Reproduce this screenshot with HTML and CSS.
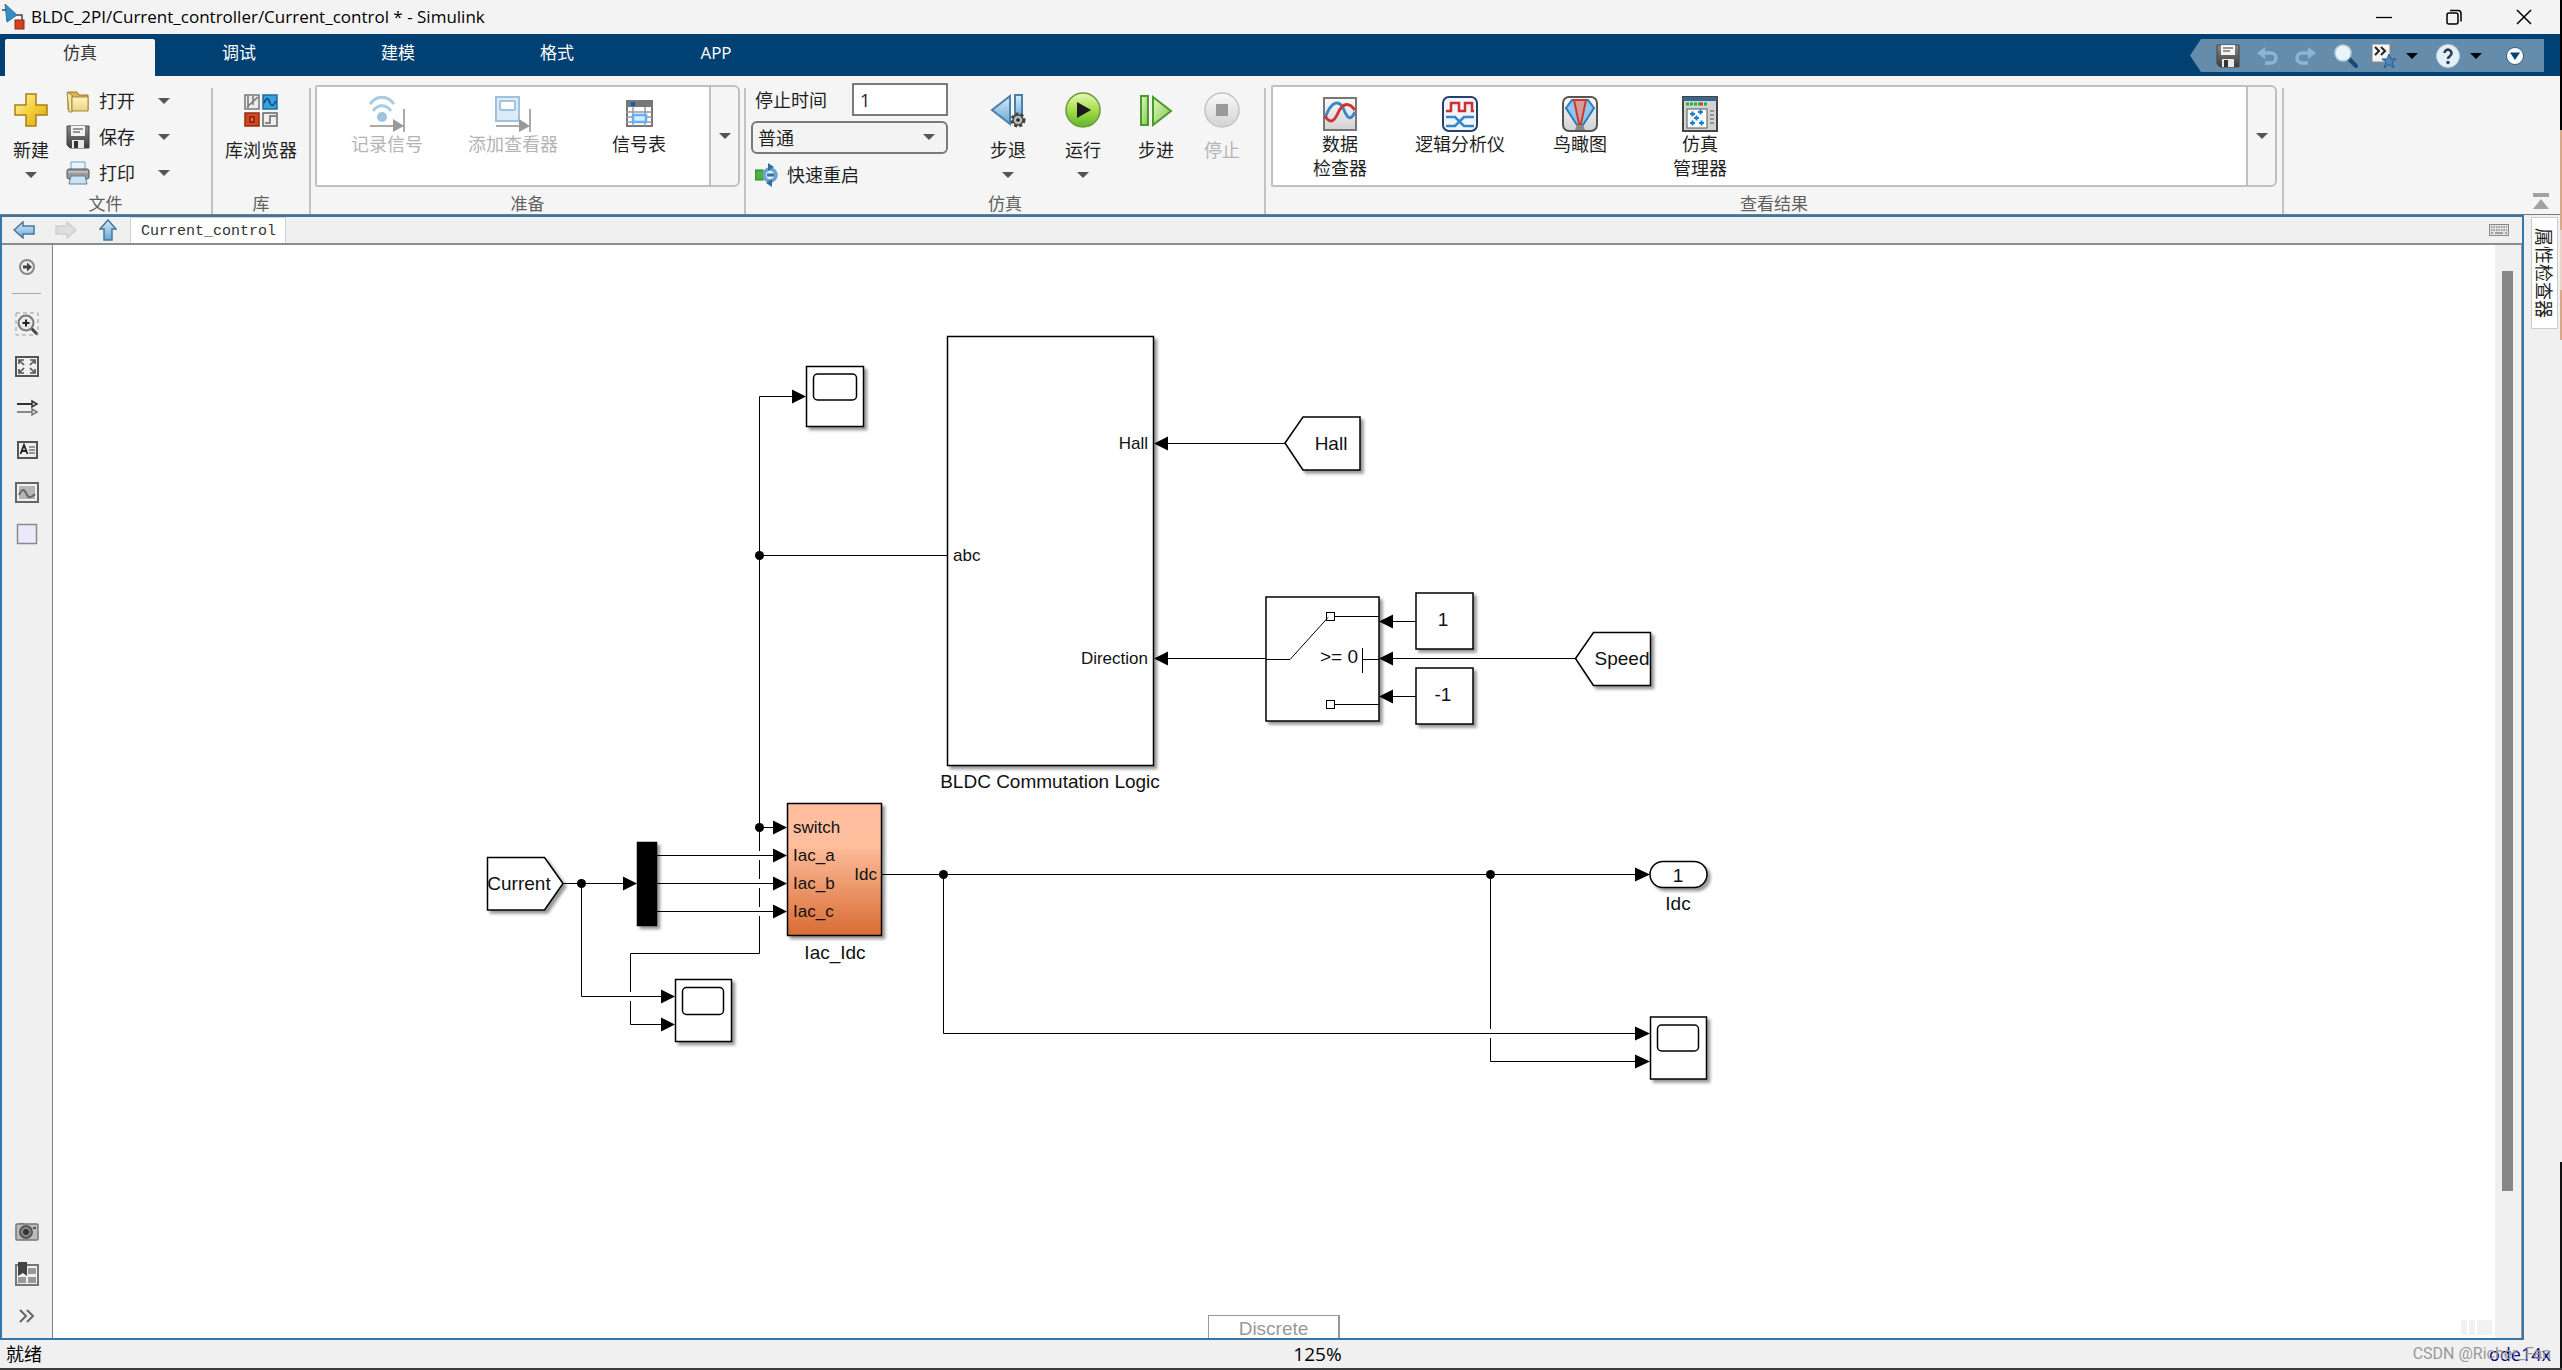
FILE: index.html
```html
<!DOCTYPE html>
<html lang="zh-CN">
<head>
<meta charset="utf-8">
<title>BLDC_2PI/Current_controller/Current_control * - Simulink</title>
<link rel="stylesheet" href="styles.css">
</head>
<body>
<svg class="defs" width="0" height="0" aria-hidden="true">
  <defs>
    <linearGradient id="gGold" x1="0" y1="0" x2="1" y2="1"><stop offset="0" stop-color="#fff6b0"/><stop offset=".5" stop-color="#f5cf3c"/><stop offset="1" stop-color="#d9a312"/></linearGradient>
    <linearGradient id="gPaper" x1="0" y1="0" x2="0" y2="1"><stop offset="0" stop-color="#fdf3c4"/><stop offset="1" stop-color="#ecd27a"/></linearGradient>
    <linearGradient id="gDark" x1="0" y1="0" x2="0" y2="1"><stop offset="0" stop-color="#8a8a8a"/><stop offset="1" stop-color="#3c3c3c"/></linearGradient>
    <linearGradient id="gBlue" x1="0" y1="0" x2="0" y2="1"><stop offset="0" stop-color="#d6ecfa"/><stop offset="1" stop-color="#6aa7d4"/></linearGradient>
    <linearGradient id="gGreen" x1="0" y1="0" x2="0" y2="1"><stop offset="0" stop-color="#eaf9b8"/><stop offset=".5" stop-color="#a6dc4a"/><stop offset="1" stop-color="#5fb52a"/></linearGradient>
    <linearGradient id="gGreenBar" x1="0" y1="0" x2="1" y2="1"><stop offset="0" stop-color="#e3f7c8"/><stop offset="1" stop-color="#7ccb45"/></linearGradient>
    <linearGradient id="gGray" x1="0" y1="0" x2="0" y2="1"><stop offset="0" stop-color="#fafafa"/><stop offset="1" stop-color="#d2d2d2"/></linearGradient>
    <linearGradient id="gBlock" x1="0" y1="0" x2="0" y2="1"><stop offset="0" stop-color="#ffbf9e"/><stop offset=".3" stop-color="#ffbf9e"/><stop offset="1" stop-color="#d86c34"/></linearGradient>
    <filter id="shadow" x="-20%" y="-20%" width="150%" height="150%"><feDropShadow dx="3" dy="3" stdDeviation="1.5" flood-color="#000" flood-opacity=".4"/></filter>
    <symbol id="iSave" viewBox="0 0 24 24"><path d="M1 1h22v22H4l-3-3z" fill="url(#gDark)" stroke="#444"/><path d="M5 1h14v10H5z" fill="#f4f4f4"/><path d="M7 4h10M7 7h7" stroke="#777" stroke-width="1.5"/><path d="M6 15h12v8H6z" fill="#e8e8e8"/><path d="M8 16h4v7H8z" fill="#333"/></symbol>
    <symbol id="iArrow" viewBox="0 0 12 6"><path d="M0 0h12L6 6z" fill="currentColor"/></symbol>
  </defs>
</svg>

<div class="window">
  <header class="titlebar">
    <svg class="logo" width="24" height="26" viewBox="0 0 24 26"><path d="M0 6h4M15 11h5v8" fill="none" stroke="#444" stroke-width="1.5"/><path d="M3 0l12 11-10 7z" fill="#2f8fc6" stroke="#2d6f9c"/><rect x="13" y="16" width="9" height="9" fill="#d6401d" stroke="#8d2a12"/></svg>
    <h1 class="title">BLDC_2PI/Current_controller/Current_control * - Simulink</h1>
    <div class="winctl">
      <button aria-label="最小化"><svg width="16" height="16"><path d="M0 8.5h16" stroke="#000" stroke-width="1.3"/></svg></button>
      <button aria-label="还原"><svg width="16" height="16" fill="none" stroke="#000" stroke-width="1.5"><rect x="1" y="4" width="11" height="11" rx="2"/><path d="M4 1.500h8a3 3 0 0 1 3 3v8"/></svg></button>
      <button aria-label="关闭"><svg width="16" height="16"><path d="M1 1l14 14M15 1L1 15" stroke="#000" stroke-width="1.5"/></svg></button>
    </div>
  </header>

  <nav class="tabs">
    <button class="tab active">仿真</button>
    <button class="tab">调试</button>
    <button class="tab">建模</button>
    <button class="tab">格式</button>
    <button class="tab">APP</button>
    <div class="qat">
      <button aria-label="保存"><svg width="24" height="24"><use href="#iSave"/></svg></button>
      <button class="undo" aria-label="撤销"><svg width="22" height="18" viewBox="0 0 22 18"><path d="M4 6h10a5 5 0 0 1 0 10H8" fill="none" stroke="#8db4d2" stroke-width="3.500"/><path d="M8 0v12L0 6z" fill="#8db4d2"/></svg></button>
      <button class="redo" aria-label="重做"><svg width="22" height="18" viewBox="0 0 22 18"><path d="M18 6H8a5 5 0 0 0 0 10h6" fill="none" stroke="#8db4d2" stroke-width="3.500"/><path d="M14 0v12l8-6z" fill="#8db4d2"/></svg></button>
      <button class="find" aria-label="查找"><svg width="24" height="24" viewBox="0 0 24 24"><path d="M14 14l8 8" stroke="#134a7c" stroke-width="4" stroke-linecap="round"/><circle cx="9" cy="9" r="8" fill="#eaf4fb" stroke="#b9cddc" stroke-width="1.5"/></svg></button>
      <button class="fav" aria-label="收藏夹"><svg width="24" height="24" viewBox="0 0 24 24"><rect x="0" y="0" width="18" height="18" fill="#f4f4f4" stroke="#888"/><path d="M3 3l4 4-4 4M9 3l4 4-4 4" fill="none" stroke="#222" stroke-width="2"/><path d="M17 10l2 5h5l-4 3 2 6-5-4-5 4 2-6-4-3h5z" fill="#4a88bd" stroke="#275a86"/></svg></button>
      <svg class="qarrow" width="12" height="6"><use href="#iArrow"/></svg>
      <button class="help" aria-label="帮助"><svg width="24" height="24" viewBox="0 0 24 24"><circle cx="12" cy="12" r="11.500" fill="#e4eef6" stroke="#b7cfe2"/><path d="M8.500 9a3.500 3.500 0 1 1 5.500 3c-1.500 1-2 1.500-2 3" fill="none" stroke="#2c3e5c" stroke-width="2.600"/><circle cx="12" cy="18.500" r="1.700" fill="#2c3e5c"/></svg></button>
      <svg class="qarrow" width="12" height="6"><use href="#iArrow"/></svg>
      <button class="more" aria-label="更多"><svg width="18" height="18" viewBox="0 0 18 18"><circle cx="9" cy="9" r="9" fill="#2a6496"/><circle cx="9" cy="9" r="8" fill="#fff"/><path d="M4 5.500h10L9 13z" fill="#0c4376"/></svg></button>
    </div>
  </nav>

  <div class="toolstrip">
    <section class="section file">
      <div class="content">
        <button class="big new"><svg width="36" height="36" viewBox="0 0 36 36"><path d="M13 2h10v11h11v10H23v11H13V23H2V13h11z" fill="url(#gGold)" stroke="#a97f14" stroke-width="1.5"/></svg><span>新建</span><svg class="drop" width="12" height="6"><use href="#iArrow"/></svg></button>
        <div class="rows">
          <button class="row"><svg width="24" height="24" viewBox="0 0 24 24"><path d="M2 3h9l2 3h9v15H2z" fill="#d9b652" stroke="#9a7a22"/><path d="M1 3l5 3v17H3z" fill="#f6e7a8" stroke="#a5873a"/><path d="M6 8h16v14H6z" fill="url(#gPaper)" stroke="#a5873a"/></svg><span>打开</span><svg class="drop" width="12" height="6"><use href="#iArrow"/></svg></button>
          <button class="row"><svg width="24" height="24"><use href="#iSave"/></svg><span>保存</span><svg class="drop" width="12" height="6"><use href="#iArrow"/></svg></button>
          <button class="row"><svg width="24" height="24" viewBox="0 0 24 24"><path d="M5 1h14v9H5z" fill="#e8f4fc" stroke="#6f9fc4"/><rect x="1" y="8" width="22" height="10" rx="2" fill="#999" stroke="#555"/><path d="M2 11h20" stroke="#ddd"/><path d="M5 15h14l2 8H3z" fill="#c9e2f4" stroke="#5c83a3"/></svg><span>打印</span><svg class="drop" width="12" height="6"><use href="#iArrow"/></svg></button>
        </div>
      </div>
      <h2>文件</h2>
    </section>
    <i class="divider"></i>
    <section class="section lib">
      <div class="content">
        <button class="big"><svg width="36" height="36" viewBox="0 0 36 36"><rect x="2" y="3" width="14" height="14" fill="#ececec" stroke="#777" stroke-width="1.500"/><path d="M5 4v12M4 15L15 5M10 4v9" stroke="#777" stroke-width="1.500"/><rect x="20" y="3" width="14" height="14" fill="#3aa0dc" stroke="#1d6ea3" stroke-width="1.500"/><path d="M21 11c3-8 5-3 6 0s3 4 6-2" fill="none" stroke="#0b4772" stroke-width="1.500"/><rect x="2" y="21" width="14" height="13" fill="#d8441c" stroke="#8f2c10" stroke-width="1.500"/><rect x="7" y="25" width="4" height="5" fill="#e96c48" stroke="#7a220b" stroke-width="1.500"/><rect x="20" y="21" width="14" height="13" fill="#eee" stroke="#666" stroke-width="1.500"/><path d="M22 31h5v-7h6" fill="none" stroke="#666" stroke-width="1.500"/></svg><span>库浏览器</span></button>
      </div>
      <h2>库</h2>
    </section>
    <i class="divider"></i>
    <section class="section prepare">
      <div class="content">
        <div class="gallery">
          <div class="items">
            <button class="item" disabled><svg width="36" height="36" viewBox="0 0 36 36"><g fill="none" stroke="#a9cbe3" stroke-width="3"><path d="M1 8c7-9 17-9 24 0M4 15c5-7 13-7 18 0"/></g><circle cx="13" cy="21" r="5" fill="#a0c3dd"/><path d="M1 30h24M35 13v23" stroke="#aaa" stroke-width="2"/><path d="M24 23l11 7-11 6z" fill="#999"/></svg><span>记录信号</span></button>
            <button class="item" disabled><svg width="36" height="36" viewBox="0 0 36 36"><rect x="1" y="1" width="23" height="24" fill="#dcebf6" stroke="#9cc3e0" stroke-width="2"/><rect x="5" y="5" width="15" height="9" rx="1" fill="#fff" stroke="#a0c4de" stroke-width="2"/><path d="M1 30h24M35 13v23" stroke="#aaa" stroke-width="2"/><path d="M24 23l11 7-11 6z" fill="#999"/></svg><span>添加查看器</span></button>
            <button class="item"><svg width="36" height="36" viewBox="0 0 36 36"><rect x="6" y="5" width="25" height="25" fill="#fff" stroke="#777" stroke-width="2"/><path d="M5 5h27v6H5z" fill="#777"/><rect x="10" y="6" width="4" height="4" fill="#0a5fae"/><path d="M5 16h26M5 21h26M5 26h26M12 11v19M24 11v19" stroke="#999" stroke-width="1.500"/><rect x="12" y="19" width="13" height="7" fill="#d8ecff" stroke="#62b0fa" stroke-width="2.500"/></svg><span>信号表</span></button>
          </div>
          <button class="expand" aria-label="展开"><svg width="12" height="6"><use href="#iArrow"/></svg></button>
        </div>
      </div>
      <h2>准备</h2>
    </section>
    <i class="divider"></i>
    <section class="section sim">
      <div class="content">
        <div class="form">
          <div class="field"><label for="stop">停止时间</label><input id="stop" type="text" value="1"></div>
          <div class="combo"><select aria-label="仿真模式"><option>普通</option></select><svg width="12" height="6"><use href="#iArrow"/></svg></div>
          <button class="restart"><svg width="24" height="24" viewBox="0 0 24 24"><rect x="0" y="7" width="8" height="10" fill="#4fb13d" stroke="#2c7a22"/><circle cx="15" cy="12" r="6" fill="#d8ecf8" stroke="#6ba3cc" stroke-width="3.500"/><path d="M13 0v8l6-4zM17 16v8l-6-4z" fill="#356f9d"/><path d="M12 12h7" stroke="#356f9d" stroke-width="3"/></svg><span>快速重启</span></button>
        </div>
        <button class="big back"><svg width="36" height="36" viewBox="0 0 36 36"><path d="M20 4v28L2 18z" fill="url(#gBlue)" stroke="#4a7fa9" stroke-width="2"/><rect x="25" y="3" width="7" height="24" fill="url(#gBlue)" stroke="#4a7fa9" stroke-width="2"/><circle cx="28" cy="28" r="6" fill="none" stroke="#444" stroke-width="3" stroke-dasharray="3 2"/><circle cx="28" cy="28" r="5" fill="#bbb" stroke="#444" stroke-width="1.500"/><circle cx="28" cy="28" r="1.800" fill="#222"/></svg><span>步退</span><svg class="drop" width="12" height="6"><use href="#iArrow"/></svg></button>
        <button class="big run"><svg width="36" height="36" viewBox="0 0 36 36"><circle cx="18" cy="18" r="17" fill="url(#gGreen)" stroke="#6b9a3c" stroke-width="1.500"/><path d="M12 10l14 8-14 8z" fill="#1b1b1b"/></svg><span>运行</span><svg class="drop" width="12" height="6"><use href="#iArrow"/></svg></button>
        <button class="big fwd"><svg width="36" height="36" viewBox="0 0 36 36"><rect x="3" y="4" width="7" height="29" fill="url(#gGreenBar)" stroke="#4c9a2c" stroke-width="2"/><path d="M15 5v28l18-14z" fill="url(#gGreenBar)" stroke="#4c9a2c" stroke-width="2"/></svg><span>步进</span></button>
        <button class="big stop" disabled><svg width="36" height="36" viewBox="0 0 36 36"><circle cx="18" cy="18" r="17" fill="url(#gGray)" stroke="#c4c4c4" stroke-width="1.500"/><rect x="12" y="12" width="12" height="12" fill="#9a9a9a"/></svg><span>停止</span></button>
      </div>
      <h2>仿真</h2>
    </section>
    <i class="divider"></i>
    <section class="section results">
      <div class="content">
        <div class="gallery">
          <div class="items wide">
            <button class="item"><svg width="36" height="36" viewBox="0 0 36 36"><rect x="2" y="2" width="32" height="32" fill="url(#gGray)" stroke="#777" stroke-width="2"/><path d="M3 22C10 3 18 4 22 14s7 10 11 2" fill="none" stroke="#3b86c8" stroke-width="3"/><path d="M3 20c5 8 9 6 13-3S26 5 33 14" fill="none" stroke="#cf3432" stroke-width="3"/></svg><span>数据<br>检查器</span></button>
            <button class="item"><svg width="36" height="36" viewBox="0 0 36 36"><rect x="1" y="1" width="34" height="34" rx="6" fill="#f1f4fa" stroke="#24406f" stroke-width="2"/><path d="M4 15h5V7h8v8h6V7h7v8h2" fill="none" stroke="#cf2f2f" stroke-width="2.500"/><path d="M4 21h9l9 9h10M4 30h9l9-9h10" fill="none" stroke="#3486cc" stroke-width="2.500"/></svg><span>逻辑分析仪</span></button>
            <button class="item"><svg width="36" height="36" viewBox="0 0 36 36"><rect x="1" y="1" width="34" height="34" rx="6" fill="url(#gGray)" stroke="#555" stroke-width="2"/><path d="M4 12l6-8h16l6 8-11 17h-6z" fill="#8dc6ee" stroke="#2d7dbd" stroke-width="2"/><path d="M12 4h12l-5 24h-2z" fill="#d69a97" stroke="#c93b2f" stroke-width="2"/><path d="M15 29h6l2 5H13z" fill="#888"/></svg><span>鸟瞰图</span></button>
            <button class="item"><svg width="36" height="36" viewBox="0 0 36 36"><rect x="1" y="1" width="34" height="34" fill="#d2d2d2" stroke="#444" stroke-width="2"/><path d="M1 1h34v4H1z" fill="#39668f"/><path d="M4 8h15" stroke="#19b63a" stroke-width="3" stroke-dasharray="3 1"/><path d="M18 8h3" stroke="#e03a20" stroke-width="3"/><path d="M22 8h3" stroke="#19b63a" stroke-width="3"/><rect x="5" y="13" width="20" height="19" fill="#fff" stroke="#555"/><path d="M8 18h5M10.500 15.500v5M16 16h5M18.500 13.500v5M12 22h5M14.500 19.500v5M8 27h5M10.500 24.500v5M17 27h5M19.500 24.500v5" stroke="#1580cc" stroke-width="2"/><path d="M28 15h4M28 19h4M28 23h4M28 27h4" stroke="#555"/></svg><span>仿真<br>管理器</span></button>
          </div>
          <button class="expand" aria-label="展开"><svg width="12" height="6"><use href="#iArrow"/></svg></button>
        </div>
      </div>
      <h2>查看结果</h2>
    </section>
    <i class="divider"></i>
    <div class="tail"><button aria-label="最小化工具条"><svg width="16" height="16"><path d="M0 0h16v4H0zM8 6l8 10H0z" fill="#a2a2a2"/></svg></button></div>
  </div>

  <div class="workspace">
    <main class="editor">
      <div class="crumbs">
        <button aria-label="后退"><svg width="22" height="18" viewBox="0 0 22 18"><path d="M1 9l9-8v4h11v8H10v4z" fill="url(#gBlue)" stroke="#45779c" stroke-width="1.500"/></svg></button>
        <button class="next" aria-label="前进"><svg width="22" height="18" viewBox="0 0 22 18"><path d="M21 9l-9-8v4H1v8h11v4z" fill="#dedede" stroke="#cfcfcf" stroke-width="1.500"/></svg></button>
        <button class="up" aria-label="转到父级"><svg width="18" height="22" viewBox="0 0 18 22"><path d="M9 1l8 9h-4v11H5V10H1z" fill="url(#gBlue)" stroke="#45779c" stroke-width="1.500"/></svg></button>
        <a class="crumb" href="#model">Current_control</a>
        <button class="keys" aria-label="键盘"><svg width="20" height="12" viewBox="0 0 20 12"><rect x=".5" y=".5" width="19" height="11" fill="#e4e4e4" stroke="#888"/><path d="M2 3h16M2 6h16" stroke="#888" stroke-width="1.500" stroke-dasharray="1.500 1"/><path d="M2 9h2M6 9h8M16 9h2" stroke="#888" stroke-width="1.500"/></svg></button>
      </div>
      <div class="stage">
        <aside class="palette">
          <button aria-label="隐藏浏览器"><svg width="24" height="24" viewBox="0 0 24 24"><circle cx="12" cy="12" r="7" fill="#eee" stroke="#888" stroke-width="2"/><path d="M8 12h5" stroke="#444" stroke-width="3"/><path d="M12 7.500v9l5-4.500z" fill="#444"/></svg></button>
          <hr>
          <button aria-label="缩放"><svg width="24" height="24" viewBox="0 0 24 24"><rect x="1" y="1" width="22" height="22" fill="none" stroke="#999" stroke-dasharray="4 3"/><path d="M16 16l6 6" stroke="#444" stroke-width="3"/><circle cx="11" cy="11" r="7.500" fill="#e8e8e8" stroke="#777" stroke-width="2"/><path d="M7.500 11h7M11 7.500v7" stroke="#222" stroke-width="2"/></svg></button>
          <button aria-label="适应视图"><svg width="24" height="24" viewBox="0 0 24 24"><rect x="1" y="3" width="22" height="19" fill="#f0f0f0" stroke="#555" stroke-width="2"/><path d="M4 10V6h5M5 7l4 4M20 10V6h-5M19 7l-4 4M4 15v4h5M5 18l4-4M20 15v4h-5M19 18l-4-4" fill="none" stroke="#555" stroke-width="1.700"/></svg></button>
          <button aria-label="采样时间"><svg width="24" height="24" viewBox="0 0 24 24"><path d="M2 8h16" stroke="#333" stroke-width="2"/><path d="M17 5l5 3-5 3z" fill="#ddd" stroke="#333" stroke-width="1.500"/><path d="M2 16h16" stroke="#888" stroke-width="2"/><path d="M17 13l5 3-5 3z" fill="#eee" stroke="#777" stroke-width="1.500"/></svg></button>
          <button aria-label="注释"><svg width="24" height="24" viewBox="0 0 24 24"><rect x="3" y="4" width="19" height="16" fill="#eee" stroke="#555" stroke-width="2"/><path d="M5.500 16l3.500-9 3.500 9M7 13h4" fill="none" stroke="#222" stroke-width="1.800"/><path d="M14 9h6M14 12h6M14 15h6" stroke="#777" stroke-width="1.500"/></svg></button>
          <button aria-label="图像"><svg width="24" height="24" viewBox="0 0 24 24"><rect x="1" y="3" width="22" height="19" fill="#f0f0f0" stroke="#666" stroke-width="2"/><rect x="4" y="6" width="16" height="13" fill="#b5b5b5"/><path d="M4 15c4-9 6-4 8 0s5 2 8-1" fill="none" stroke="#666" stroke-width="2"/></svg></button>
          <button aria-label="区域"><svg width="24" height="24" viewBox="0 0 24 24"><rect x="2.500" y="2.500" width="19" height="19" fill="#ebe9fa" stroke="#8a8a8a" stroke-width="1.500"/></svg></button>
          <button class="camera" aria-label="截图"><svg width="24" height="24" viewBox="0 0 24 24"><path d="M4 3h5v3H4z" fill="#777"/><rect x="1" y="4" width="22" height="16" rx="1" fill="#bcbcbc" stroke="#777" stroke-width="1.500"/><circle cx="11" cy="12" r="6" fill="#888" stroke="#555" stroke-width="2"/><circle cx="11" cy="12" r="3" fill="#333"/><rect x="18" y="7" width="3" height="2" fill="#555"/></svg></button>
          <button aria-label="视图标记"><svg width="24" height="24" viewBox="0 0 24 24"><rect x="1" y="3" width="22" height="20" fill="#f0f0f0" stroke="#777" stroke-width="2"/><path d="M13 6h8v6h-8zM3 15h8v6H3zM13 15h8v6h-8z" fill="#999"/><path d="M3 0h9v14l-4-3-5 3z" fill="#444"/></svg></button>
          <button aria-label="展开面板"><svg width="24" height="24" viewBox="0 0 24 24"><path d="M5 6l6 6-6 6M12 6l6 6-6 6" fill="none" stroke="#666" stroke-width="2"/></svg></button>
        </aside>
        <div class="canvas" id="model">
          <svg class="diagram" width="100%" height="100%">
            <g transform="translate(-53 -245)">
              <g class="wire">
                <path d="M759.500 827V396.500H794M759.500 555.500H947M1168 443.500H1286M1168 658.500H1266M1392 621.500H1416M1392 658.500H1577M1392 696.500H1416"/>
                <path d="M563 883.500H624M657 855.500H774M657 883.500H774M657 911.500H774M759 827.500H774M882 874.500H1636"/>
                <path d="M759.500 827V851M759.500 860V879M759.500 888V907M759.500 916V953.500H630.500V992M630.500 1001V1024.500H662M581.500 883V996.500H662"/>
                <path d="M943.500 874V1033.500H1636M1490.500 874V1029M1490.500 1038V1061.500H1636"/>
              </g>
              <g class="heads">
                <path d="M806 396.500l-14-7v14zM1154 443.500l14-7v14zM1154 658.500l14-7v14zM1379 621.500l14-7v14zM1379 658.500l14-7v14zM1379 696.500l14-7v14z"/>
                <path d="M637 883.500l-14-7v14zM787 827.500l-14-7v14zM787 855.500l-14-7v14zM787 883.500l-14-7v14zM787 911.500l-14-7v14zM675 996.500l-14-7v14zM675 1024.500l-14-7v14zM1650 874.500l-15-7v14zM1650 1033.500l-15-7v14zM1650 1061.500l-15-7v14z"/>
                <circle cx="759.500" cy="555.500" r="4.500"/><circle cx="759.500" cy="827.500" r="4.500"/><circle cx="581.500" cy="883.500" r="4.500"/><circle cx="943.500" cy="874.500" r="4.500"/><circle cx="1490.500" cy="874.500" r="4.500"/>
              </g>
              <g class="block">
                <rect x="947.500" y="336.500" width="206" height="429"/>
                <rect x="806.500" y="366.500" width="57" height="60"/>
                <path d="M1285 443l18-26h57v53h-57z"/>
                <rect x="1266" y="597" width="113" height="124"/>
                <rect x="1416" y="593" width="57" height="56"/>
                <rect x="1416" y="668" width="57" height="56"/>
                <path d="M1575.500 658.500l18-26h57v53h-57z"/>
                <path d="M487.500 857.500h57l18.500 26-18.500 26.500h-57z"/>
                <rect class="mux" x="637.500" y="842.500" width="19" height="83"/>
                <rect class="sub" x="787.500" y="803.500" width="94" height="132"/>
                <rect x="675.500" y="979.500" width="56" height="62"/>
                <rect x="1650" y="861.500" width="57" height="26" rx="13"/>
                <rect x="1650.500" y="1017" width="56" height="62"/>
              </g>
              <g class="screen">
                <rect x="813.500" y="374" width="43" height="26" rx="4"/>
                <rect x="682.500" y="987.500" width="41" height="27" rx="4"/>
                <rect x="1657.500" y="1025" width="41" height="26" rx="4"/>
              </g>
              <g class="wire">
                <path d="M1266 659.500h24l38-42M1334 616.500h45M1334 704.500h45M1362.500 648v25M1362 659.500h17"/>
                <rect x="1326.500" y="612.500" width="8" height="8"/><rect x="1326.500" y="700.500" width="8" height="8"/>
              </g>
              <g class="port">
                <text x="953" y="561">abc</text>
                <text x="1148" y="449" text-anchor="end">Hall</text>
                <text x="1148" y="664" text-anchor="end">Direction</text>
                <text x="793" y="833">switch</text>
                <text x="793" y="861">Iac_a</text>
                <text x="793" y="889">Iac_b</text>
                <text x="793" y="917">Iac_c</text>
                <text x="877" y="880" text-anchor="end">Idc</text>
              </g>
              <g class="name">
                <text x="1320" y="663">&gt;= 0</text>
                <text x="1050" y="788" text-anchor="middle">BLDC Commutation Logic</text>
                <text x="1331" y="450" text-anchor="middle">Hall</text>
                <text x="1622" y="665" text-anchor="middle">Speed</text>
                <text x="1443" y="626" text-anchor="middle">1</text>
                <text x="1443" y="701" text-anchor="middle">-1</text>
                <text x="519" y="890" text-anchor="middle">Current</text>
                <text x="835" y="959" text-anchor="middle">Iac_Idc</text>
                <text x="1678" y="882" text-anchor="middle">1</text>
                <text x="1678" y="910" text-anchor="middle">Idc</text>
              </g>
            </g>
          </svg>
          <div class="badge">Discrete</div>
          <div class="grip"><i></i><i></i><i></i></div>
        </div>
        <div class="scroll"><div class="thumb"></div></div>
      </div>
    </main>
    <aside class="dock"><button class="inspector">属性检查器</button></aside>
  </div>

  <footer class="status">
    <span>就绪</span>
    <span class="zoom">125%</span>
    <span class="solver"><span class="mark">CSDN @Richer_Fan</span><a href="#model">ode14x</a></span>
  </footer>
</div>
<div class="edge"></div>
</body>
</html>
```
FILE: styles.css
```css
* { box-sizing: border-box; }

body {
  margin: 0;
  min-height: 100vh;
  display: flex;
  background: #3c3c3c;
  padding-bottom: 2px;
  font-family: "Open Sans", "Noto Sans CJK SC", sans-serif;
  font-size: 18px;
  line-height: 24px;
  color: #1f1f1f;
}

button {
  margin: 0;
  padding: 0;
  border: 0;
  background: none;
  font: inherit;
  color: inherit;
}

svg { display: block; flex: none; }
.defs { position: absolute; }

.window {
  flex: 1;
  min-width: 0;
  display: flex;
  flex-direction: column;
  background: #f0f0f0;
}

.edge {
  width: 2px;
  background: linear-gradient(#000 130px, #d9a889 130px 230px, #ecd3cc 230px 290px, #d9a889 290px 340px, #f0f0f0 340px 1162px, #111 1162px);
}

/* title bar */
.titlebar {
  height: 34px;
  display: flex;
  align-items: center;
  padding-left: 2px;
  background: #f3f3f3;
}
.title {
  flex: 1;
  margin: 0 0 0 5px;
  font-size: 17px;
  font-weight: 400;
  color: #000;
}
.winctl { display: flex; gap: 54px; padding-right: 28px; }

/* ribbon tabs */
.tabs {
  height: 42px;
  display: flex;
  align-items: flex-end;
  gap: 9px;
  padding-left: 5px;
  background: #004073;
}
.tab {
  width: 150px;
  height: 37px;
  padding-bottom: 10px;
  font-size: 17px;
  color: #fff;
}
.tab.active { background: #f5f5f5; color: #333; border-radius: 2px 2px 0 0; }

.qat {
  width: 354px;
  height: 33px;
  margin: 0 16px 4px auto;
  padding-left: 26px;
  display: flex;
  align-items: center;
  background: #668cac;
  clip-path: polygon(11px 0, 100% 0, 100% 100%, 11px 100%, 0 50%);
  color: #000;
}
.undo { margin-left: 17px; }
.redo { margin-left: 15px; }
.find { margin-left: 18px; }
.fav { margin-left: 14px; }
.qarrow { margin-left: 10px; }
.help { margin-left: 18px; }
.more { margin-left: 24px; }

/* toolstrip */
.toolstrip {
  height: 139px;
  display: flex;
  background: #f5f5f5;
  border-bottom: 1px solid #7b7b7b;
  color: #1f1f1f;
}
.divider { width: 2px; margin-top: 12px; background: #c3c3c3; }
.section { display: flex; flex-direction: column; }
.section h2 {
  margin: 0;
  font-size: 17px;
  line-height: 20px;
  font-weight: 400;
  text-align: center;
  color: #5f5f5f;
}
.content { height: 118px; display: flex; padding-top: 7px; }
.drop, .expand, .combo svg { color: #555; }

.big {
  display: flex;
  flex-direction: column;
  align-items: center;
  padding-top: 9px;
}
.big span { margin-top: 10px; white-space: nowrap; }
.big .drop { margin-top: 10px; }

.file { width: 211px; }
.new { width: 62px; }
.rows { display: flex; flex-direction: column; padding-left: 4px; }
.row { height: 36px; display: flex; align-items: center; }
.row span { margin-left: 9px; }
.row .drop { margin-left: 23px; }

.lib { width: 96px; }
.lib .big { width: 96px; }

.prepare { width: 433px; }
.prepare .content { padding-left: 4px; padding-right: 4px; }
.gallery {
  flex: 1;
  height: 102px;
  margin-top: 2px;
  display: flex;
  border: 2px solid #c0c0c0;
  border-radius: 2px 6px 6px 2px;
  overflow: hidden;
}
.items { flex: 1; display: flex; padding-left: 7px; background: #fff; }
.item {
  width: 126px;
  display: flex;
  flex-direction: column;
  align-items: center;
  padding-top: 9px;
  white-space: nowrap;
}
.items.wide .item { width: 120px; }
.item span { margin-top: 0; }
button:disabled { color: #b4b4b4; }
.expand {
  width: 29px;
  display: flex;
  align-items: center;
  justify-content: center;
  border-left: 2px solid #c0c0c0;
}

.sim { width: 518px; }
.sim .content { padding-left: 5px; }
.form { width: 197px; margin-right: 22px; display: flex; flex-direction: column; gap: 5px; }
.field { display: flex; align-items: center; justify-content: space-between; padding-left: 4px; }
.field input {
  width: 96px;
  height: 33px;
  padding: 0 6px;
  border: 2px solid #7a7a7a;
  background: #fff;
  font: inherit;
  color: inherit;
}
.combo { position: relative; }
.combo select {
  width: 100%;
  height: 33px;
  padding: 0 5px;
  border: 2px solid #7a7a7a;
  border-radius: 6px;
  appearance: none;
  background: #f3f3f3;
  font: inherit;
  color: inherit;
}
.combo svg { position: absolute; right: 13px; top: 13px; }
.restart { display: flex; align-items: center; gap: 8px; height: 32px; padding-left: 4px; }
.back { width: 76px; }
.run { width: 74px; }
.fwd { width: 72px; }
.stop { width: 60px; }

.results { flex: 1; }
.results .content { padding-left: 5px; padding-right: 5px; }
.tail {
  width: 276px;
  display: flex;
  align-items: flex-end;
  justify-content: flex-end;
  padding: 0 11px 5px 0;
}

/* editor */
.workspace { flex: 1; display: flex; }
.editor {
  flex: 1;
  min-width: 0;
  display: flex;
  flex-direction: column;
  border: 2px solid #3577ab;
}
.crumbs {
  height: 28px;
  display: flex;
  align-items: center;
  padding: 0 13px 0 11px;
  border-bottom: 2px solid #8a8c92;
}
.next { margin-left: 20px; }
.up { margin-left: 22px; }
.crumb {
  align-self: stretch;
  width: 156px;
  margin-left: 13px;
  padding-left: 10px;
  border: 1px solid #d4d4d4;
  border-bottom: 0;
  background: #fff;
  font-family: "Liberation Mono", monospace;
  font-size: 15px;
  line-height: 28px;
  color: #333;
  text-decoration: none;
}
.keys { margin-left: auto; }

.stage { flex: 1; display: flex; }
.palette {
  width: 51px;
  display: flex;
  flex-direction: column;
  align-items: center;
  gap: 18px;
  padding: 10px 1px 10px 0;
  border-right: 1px solid #7d8088;
}
.palette hr {
  width: 29px;
  height: 1px;
  margin: -4px 0 0;
  border: 0;
  background: #aaa;
}
.camera { margin-top: auto; }

.canvas { flex: 1; min-width: 0; position: relative; background: #fff; overflow: hidden; }
.diagram { position: absolute; inset: 0; font-family: "Liberation Sans", Arial, sans-serif; }
.wire { fill: none; stroke: #000; stroke-width: 1; }
.heads { fill: #000; }
.block { fill: #fff; stroke: #000; stroke-width: 1.500; filter: url(#shadow); }
.block .mux { fill: #000; }
.block .sub { fill: url(#gBlock); }
.screen { fill: #fff; stroke: #000; stroke-width: 1.500; }
.port { font-size: 17px; fill: #111; }
.name { font-size: 19px; fill: #111; }

.badge {
  position: absolute;
  left: 50%;
  bottom: 0;
  width: 132px;
  height: 23px;
  margin-left: -66px;
  border: 1px solid #999;
  border-width: 1px 2px 0 1px;
  font: 19px/25px "Liberation Sans", Arial, sans-serif;
  text-align: center;
  color: #999;
}
.grip { position: absolute; right: 3px; bottom: 3px; display: flex; gap: 2px; }
.grip i { width: 6px; height: 15px; background: #f1f1f1; }
.grip i:last-child { width: 15px; }

.scroll { width: 27px; padding: 26px 0 147px 7px; border-right: 1px solid #999; display: flex; }
.thumb { width: 11px; background: #868686; }

.dock { width: 36px; padding: 2px 2px 0 7px; }
.inspector {
  width: 27px;
  height: 112px;
  border: 1px solid #ccc;
  background: #fff;
  writing-mode: vertical-rl;
  text-orientation: sideways;
  line-height: 27px;
}

/* status bar */
.status {
  height: 28px;
  display: grid;
  grid-template-columns: 1fr auto 1fr;
  align-items: center;
  padding: 0 9px 0 6px;
  color: #000;
}
.zoom { font-size: 19px; padding-left: 78px; }
.solver { position: relative; text-align: right; }
.solver a { font-size: 18px; color: #000080; text-decoration: none; }
.mark { position: absolute; right: 0; font-size: 16px; font-family: Roboto, sans-serif; color: #999; }
```
